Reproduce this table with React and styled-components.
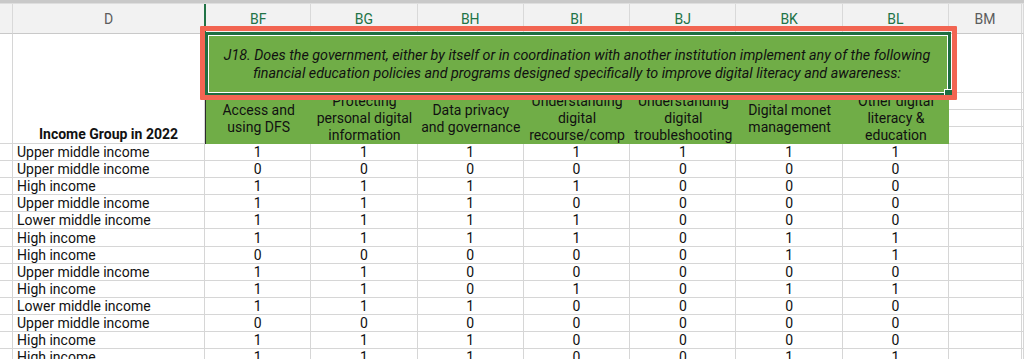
import styled, { createGlobalStyle } from "styled-components";

const GlobalStyle = createGlobalStyle`
  html, body {
    margin: 0;
    padding: 0;
    background: #fff;
    overflow: hidden;
  }
  body {
    font-family: Roboto, "Liberation Sans", sans-serif;
    color: #111;
  }
`;

const columns = [
  { key: "BF", label: ["Access and", "using DFS"] },
  { key: "BG", label: ["Protecting", "personal digital", "information"] },
  { key: "BH", label: ["Data privacy", "and governance"] },
  { key: "BI", label: ["Understanding", "digital", "recourse/comp"] },
  { key: "BJ", label: ["Understanding", "digital", "troubleshooting"] },
  { key: "BK", label: ["Digital monet", "management"] },
  { key: "BL", label: ["Other digital", "literacy &", "education"] },
];

const rows = [
  ["Upper middle income", [1, 1, 1, 1, 1, 1, 1]],
  ["Upper middle income", [0, 0, 0, 0, 0, 0, 0]],
  ["High income", [1, 1, 1, 1, 0, 0, 0]],
  ["Upper middle income", [1, 1, 1, 0, 0, 0, 0]],
  ["Lower middle income", [1, 1, 1, 1, 0, 0, 0]],
  ["High income", [1, 1, 1, 1, 0, 1, 1]],
  ["High income", [0, 0, 0, 0, 0, 1, 1]],
  ["Upper middle income", [1, 1, 0, 0, 0, 0, 0]],
  ["High income", [1, 1, 0, 1, 0, 1, 1]],
  ["Lower middle income", [1, 1, 1, 0, 0, 0, 0]],
  ["Upper middle income", [0, 0, 0, 0, 0, 0, 0]],
  ["High income", [1, 1, 1, 0, 0, 0, 0]],
  ["High income", [1, 1, 1, 0, 0, 1, 1]],
];

const App = () => {
  return (
    <>
      <GlobalStyle />
      <TopBar />
      <Sheet>
        {/* column letters */}
        <ColHead />
        <ColHead>D</ColHead>
        {columns.map((c, i) => (
          <ColHead key={c.key} $selected $first={i === 0}>
            {c.key}
          </ColHead>
        ))}
        <ColHead>BM</ColHead>
        <ColHead />

        {/* header block */}
        <Cell $rows={4} />
        <TitleCell $rows={4}>Income Group in 2022</TitleCell>
        <Question>
          <QuestionText>
            J18. Does the government, either by itself or in coordination with
            another institution implement any of the following
            <br />
            financial education policies and programs designed specifically to
            improve digital literacy and awareness:
          </QuestionText>
          <Selection>
            <Handle />
          </Selection>
          <Annotation />
        </Question>
        <Cell />
        <Cell />
        {columns.map((c, i) => (
          <Label key={c.key} $first={i === 0}>
            {c.label.map((line) => (
              <span key={line}>{line}</span>
            ))}
          </Label>
        ))}
        <Cell />
        <Cell />
        <Cell />
        <Cell />
        <Cell />
        <Cell />

        {/* data */}
        {rows.map(([group, values], r) => (
          <Row key={r}>
            <Cell />
            <TextCell>{group}</TextCell>
            {values.map((v, i) => (
              <NumCell key={i}>{v}</NumCell>
            ))}
            <Cell />
            <Cell />
          </Row>
        ))}
      </Sheet>
    </>
  );
};

const TopBar = styled.div`
  height: 3px;
  background: #c9c9c9;
  border-bottom: 1px solid #dedede;
`;

const Sheet = styled.div`
  display: grid;
  grid-template-columns: 13px 192px repeat(7, 106.3px) 73px 1fr;
  grid-template-rows: 30px 59px 17px 17px 17px repeat(13, 17.1px);
  font-size: 14px;
`;

const Row = styled.div`
  display: contents;
`;

const ColHead = styled.div`
  display: flex;
  align-items: center;
  justify-content: center;
  background: #f2f2f2;
  border-right: 1px solid #d9d9d9;
  border-bottom: 1px solid #c9c9c9;
  border-left: ${(p) => (p.$first ? "2px solid #217346" : "none")};
  margin-left: ${(p) => (p.$first ? "-1px" : "0")};
  color: ${(p) => (p.$selected ? "#217346" : "#5c5c5c")};
  font-size: 14px;
  box-sizing: border-box;
`;

const Cell = styled.div`
  grid-row: span ${(p) => p.$rows || 1};
  border-right: 1px solid #d6d6d6;
  border-bottom: 1px solid #d6d6d6;
  box-sizing: border-box;
`;

const TitleCell = styled(Cell)`
  display: flex;
  align-items: flex-end;
  justify-content: center;
  padding-bottom: 1px;
  font-weight: 700;
`;

const TextCell = styled(Cell)`
  display: flex;
  align-items: center;
  padding-left: 4px;
  white-space: nowrap;
  line-height: 1;
`;

const NumCell = styled(Cell)`
  display: flex;
  align-items: center;
  justify-content: center;
  line-height: 1;
`;

const Question = styled.div`
  grid-column: span 7;
  position: relative;
  display: flex;
  align-items: center;
  justify-content: center;
  background: #70ad47;
  z-index: 2;
`;

const QuestionText = styled.p`
  margin: 0;
  font-size: 14.3px;
  font-style: italic;
  text-align: center;
  line-height: 18px;
  white-space: nowrap;
`;

const Selection = styled.div`
  position: absolute;
  left: 0;
  right: -2px;
  top: -2px;
  bottom: -3px;
  border: 3px solid #1e6e42;
  box-shadow: inset 0 0 0 1px #ffffff;
`;

const Handle = styled.div`
  position: absolute;
  right: -5px;
  bottom: -5px;
  width: 7px;
  height: 7px;
  background: #1e6e42;
  border: 1px solid #ffffff;
`;

const Annotation = styled.div`
  position: absolute;
  left: -5px;
  right: -8px;
  top: -8px;
  bottom: -7px;
  border: 5px solid #f26552;
  border-radius: 1px;
  pointer-events: none;
`;

const Label = styled.div`
  grid-row: span 3;
  display: flex;
  flex-direction: column;
  align-items: center;
  justify-content: center;
  background: #70ad47;
  border-left: ${(p) => (p.$first ? "1px solid #2b2b2b" : "none")};
  line-height: 17px;
  text-align: center;
  white-space: nowrap;
  overflow: hidden;
`;

export default App;
